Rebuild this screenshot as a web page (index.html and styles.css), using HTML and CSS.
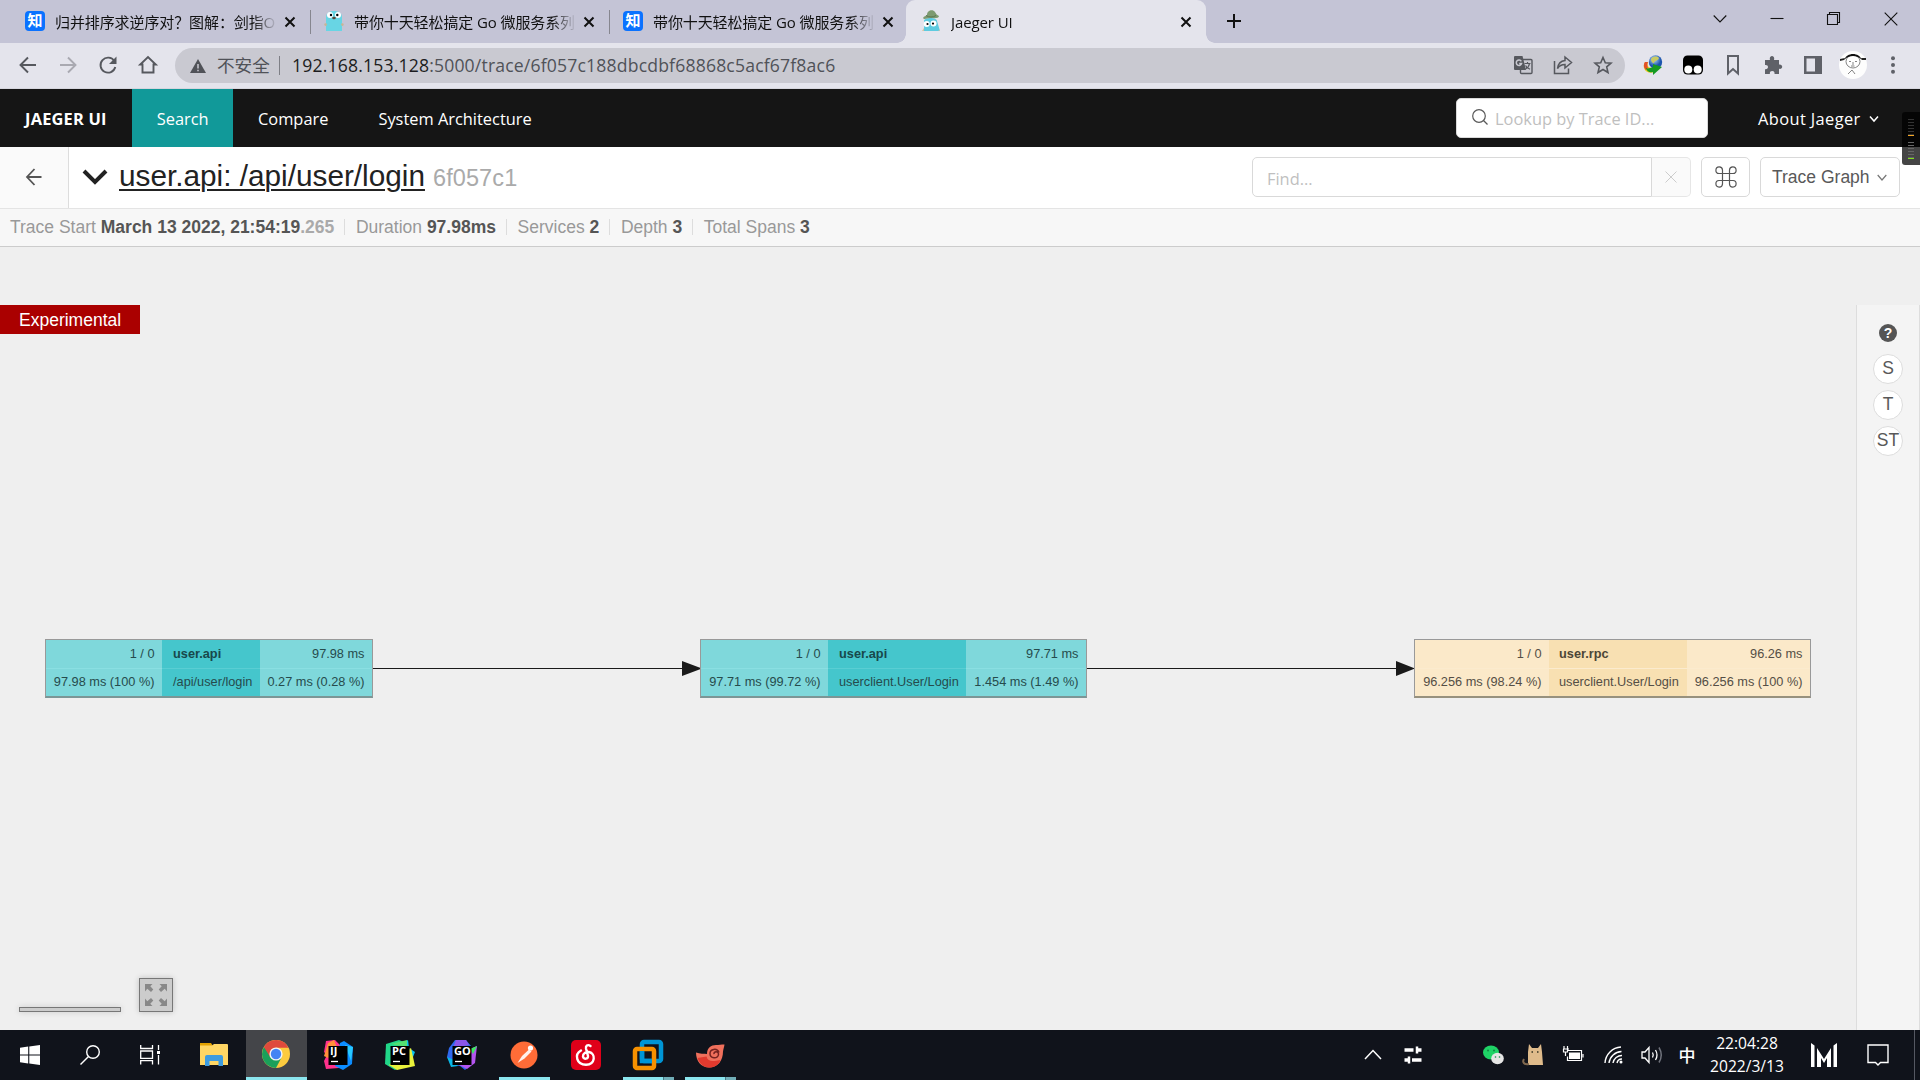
FILE: index.html
```html
<!DOCTYPE html>
<html lang="zh-CN">
<head>
<meta charset="utf-8">
<title>Jaeger UI</title>
<link rel="stylesheet" href="styles.css">
</head>
<body>
<div class="screen">
  <div class="tabstrip">
    <div class="tab">
      <span class="zhi">知</span>
      <span class="tab-title">归并排序求逆序对？图解：剑指O</span>
      <svg class="tab-close" viewBox="0 0 12 12"><path d="M1.5 1.5l9 9M10.5 1.5l-9 9"/></svg>
    </div>
    <div class="tab">
      <svg class="fav" viewBox="0 0 20 20"><path d="M2 20V7C2 2 5 0 10 0s8 2 8 7v13z" fill="#68d5e4"/><circle cx="1.6" cy="13.6" r="1.3" fill="#c9b595"/><circle cx="18.4" cy="13.6" r="1.3" fill="#c9b595"/><circle cx="6" cy="4" r="3" fill="#fff"/><circle cx="14" cy="4" r="3" fill="#fff"/><circle cx="7" cy="4" r="1.2"/><circle cx="13.3" cy="4" r="1.2"/><ellipse cx="10" cy="7" rx="1.8" ry="1.2" fill="#5b4a3c"/></svg>
      <span class="tab-title">带你十天轻松搞定 Go 微服务系列</span>
      <svg class="tab-close" viewBox="0 0 12 12"><path d="M1.5 1.5l9 9M10.5 1.5l-9 9"/></svg>
    </div>
    <div class="tab tab-last">
      <span class="zhi">知</span>
      <span class="tab-title">带你十天轻松搞定 Go 微服务系列</span>
      <svg class="tab-close" viewBox="0 0 12 12"><path d="M1.5 1.5l9 9M10.5 1.5l-9 9"/></svg>
    </div>
    <div class="tab tab-active">
      <svg class="fav" viewBox="0 0 20 20"><path d="M3 20V10c0-4 13-4 13 0l3 10z" fill="#5ecbe0"/><path d="M2 7c1-2 3-2 4-3 0-5 6-6 8-3 1 2 2 3 4 4 0 3-6 2-9 2S3 9 2 7z" fill="#7d9a70"/><path d="M5 4.500c3 2 7 2 10 0" stroke="#5b7550" fill="none"/><circle cx="5.700" cy="13" r="3" fill="#fff"/><circle cx="12.500" cy="12.500" r="3" fill="#fff"/><circle cx="6.500" cy="13" r="1.1"/><circle cx="12" cy="12.600" r="1.1"/><path d="M1 20l2-3v3zM17 19l2 0v1z" fill="#d8c3a0"/></svg>
      <span class="tab-title">Jaeger UI</span>
      <svg class="tab-close" viewBox="0 0 12 12"><path d="M1.5 1.5l9 9M10.5 1.5l-9 9"/></svg>
    </div>
    <svg class="new-tab" viewBox="0 0 16 16"><path d="M8 1v14M1 8h14"/></svg>
    <div class="win-controls">
      <svg viewBox="0 0 14 14"><path d="M.7 3.5L7 10l6.300-6.500"/></svg>
      <svg viewBox="0 0 14 14"><path d="M.5 6.500h13"/></svg>
      <svg viewBox="0 0 14 14"><path d="M.5 2.500h10v10h-10zM2.500 2.500v-2h10v10h-2"/></svg>
      <svg viewBox="0 0 14 14"><path d="M.7.7l12.600 12.600M13.300.7L.7 13.300"/></svg>
    </div>
  </div>

  <div class="toolbar">
    <div class="nav-btns">
      <svg viewBox="0 0 20 20"><path d="M18 10H3M10 2.500L2.500 10l7.500 7.500"/></svg>
      <svg class="dim" viewBox="0 0 20 20"><path d="M2 10h15M10 2.500l7.500 7.500-7.500 7.500"/></svg>
      <svg viewBox="0 0 20 20"><path d="M16.300 6A7.500 7.500 0 1 0 17.300 12"/><path class="fill" d="M18.500 1.500v7.500H11z"/></svg>
      <svg viewBox="0 0 20 20"><path d="M4.500 17.500V9.500H2.200L10 2l7.800 7.500h-2.300v8z"/></svg>
    </div>
    <div class="omnibox">
      <svg class="warn" viewBox="0 0 16 14"><path d="M8 0l8 14H0z" fill="#505258"/><path d="M8 5v4.500M8 10.700v1.600" stroke="#c9c9d1" stroke-width="1.500"/></svg>
      <span class="insecure">不安全</span>
      <span class="omni-sep"></span>
      <span class="url"><b>192.168.153.128</b>:5000/trace/6f057c188dbcdbf68868c5acf67f8ac6</span>
      <div class="omni-icons">
        <svg viewBox="0 0 20 20"><rect x="7.500" y="4.500" width="11.500" height="14" rx="1" stroke-width="1.400"/><path class="fill" d="M2 1h7.500l3.500 14H2a1 1 0 0 1-1-1V2a1 1 0 0 1 1-1z"/><path d="M8.300 6.300A2.700 2.700 0 1 0 8.600 8.500H6.200" stroke="#c9c9d1" stroke-width="1.500"/><path d="M11.500 8.500h6M14.500 7v1.500M16.500 8.500c-.5 3-2 4.500-4 5.500M12.500 10.500c1 2 2.500 3 4.500 3.800" stroke-width="1.200"/></svg>
        <svg viewBox="0 0 20 20"><path d="M1.500 6v12.500h14V13.500M12 2l6.500 5.500L12 13v-3.500c-3.500 0-5.500.8-7.500 4C5 9.500 7.500 6 12 5.500z" stroke-width="1.500"/></svg>
        <svg viewBox="0 0 20 20"><path d="M10 2.500l2.300 5.200 5.700.5-4.300 3.700 1.300 5.600-5-3-5 3 1.300-5.600L2 8.200l5.700-.5z" stroke-width="1.600"/></svg>
      </div>
    </div>
    <div class="extensions">
      <svg viewBox="0 0 20 20"><defs><radialGradient id="globe" cx=".4" cy=".3"><stop offset="0" stop-color="#b9dcff"/><stop offset="1" stop-color="#1c55ad"/></radialGradient></defs><path d="M2 7C-2 13 4 20 11 17l-2-4C5 13 4 10 5 7z" fill="#e9c81c"/><path d="M2 7c-2 3-1 6 1 8l2-2C4 11 4 9 5 7z" fill="#e2502a"/><circle cx="12.500" cy="7" r="6.700" fill="url(#globe)"/><path d="M8 4c2-3 6-3 8-1-1 3-4 2-5 5-2 0-3-2-3-4z" fill="#c9cb63"/><path d="M3 13c2 1 4 0 7-1V9l9 3-9 8v-3c-3 1-6 0-7-4z" fill="#159a22"/></svg>
      <svg viewBox="0 0 20 20"><rect width="20" height="19" x="0" y=".5" rx="4.500" fill="#000"/><circle cx="5.300" cy="14.500" r="4" fill="#fff"/><circle cx="14.700" cy="14.500" r="4" fill="#fff"/></svg>
      <svg class="line" viewBox="0 0 20 20"><path d="M5 1h10v17.500l-5-4.500-5 4.500z"/></svg>
      <svg viewBox="0 0 20 20"><path d="M2 5h5C6.300 2.500 7.500 1 9 1s2.700 1.500 2 4h5v4.500c2-.3 3.200.8 3.200 2.300S18 14.200 16 13.800V19h-4.500c.3-2-.7-3-2.300-3s-2.700 1-2.300 3H2v-4.800c2 .3 3-.9 3-2.200S4 9.700 2 10z" fill="#5f6168"/></svg>
      <svg viewBox="0 0 20 20"><path d="M1 1h18v18H1zM3.500 3.500v13H12v-13z" fill="#5f6168" fill-rule="evenodd"/></svg>
      <svg class="avatar" viewBox="0 0 28 28"><circle cx="14" cy="14" r="14" fill="#fdfdfd"/><ellipse cx="14" cy="10.500" rx="7" ry="6.500" fill="#fff" stroke="#666" stroke-width=".8"/><path d="M5 9C8 1 20 1 23 9c-3-3-6-4-9-4S8 6 5 9z" fill="#111"/><path d="M1 8l5-1-1 2-4 1zM22 7l5 0v2l-4 0z" fill="#222"/><path d="M10 10.500h2M16 10.500h2M14 11v3M12 15h3.500M13 19l-4 4M13 19l3 4" stroke="#666" stroke-width=".8" fill="none"/></svg>
      <svg viewBox="0 0 20 20"><g fill="#5f6168"><circle cx="10" cy="3.200" r="2"/><circle cx="10" cy="10" r="2"/><circle cx="10" cy="16.800" r="2"/></g></svg>
    </div>
  </div>

  <nav class="jaeger-nav">
    <span class="brand">JAEGER UI</span>
    <span class="nav-item selected">Search</span>
    <span class="nav-item">Compare</span>
    <span class="nav-item">System Architecture</span>
    <div class="lookup"><svg viewBox="0 0 16 16"><circle cx="7" cy="7" r="6.300"/><path d="M11.500 11.500l4 4"/></svg><span>Lookup by Trace ID...</span></div>
    <div class="about">About Jaeger<svg viewBox="0 0 10 8"><path d="M1 1.500l4 4.500 4-4.500"/></svg></div>
    <div class="meter"><i></i><i></i></div>
  </nav>

  <header class="trace-head">
    <div class="back"><svg viewBox="0 0 16 18"><path d="M15.500 9H1M8.500 1L1 9l7.500 8"/></svg></div>
    <svg class="collapse" viewBox="0 0 26 16"><path d="M2 2l11 11L24 2"/></svg>
    <h1><span class="trace-name">user.api: /api/user/login</span><small>6f057c1</small></h1>
    <div class="find"><span>Find...</span></div>
    <div class="find-clear"><svg viewBox="0 0 12 12"><path d="M.5.5l11 11M11.500.5l-11 11"/></svg></div>
    <div class="shortcut"><svg viewBox="0 0 22 22"><path d="M7.500 7.500h7v7h-7zM7.500 7.500H4A3.300 3.300 0 1 1 7.500 4zM14.500 7.500V4A3.300 3.300 0 1 1 18 7.500zM14.500 14.500H18A3.300 3.300 0 1 1 14.500 18zM7.500 14.500V18A3.300 3.300 0 1 1 4 14.500z"/></svg></div>
    <div class="view-select">Trace Graph<svg viewBox="0 0 10 8"><path d="M.7 1l4.300 5 4.300-5"/></svg></div>
  </header>

  <div class="trace-meta">
    <span>Trace Start <b>March 13 2022, 21:54:19<em>.265</em></b></span>
    <span>Duration <b>97.98ms</b></span>
    <span>Services <b>2</b></span>
    <span>Depth <b>3</b></span>
    <span>Total Spans <b>3</b></span>
  </div>

  <main class="graph">
    <div class="experimental">Experimental</div>
    <svg class="edges" viewBox="0 0 1920 783"><path d="M373 421.500H690M1087 421.500H1404" stroke="#1a1a1a" stroke-width="1.200"/><path d="M682 414l20 7.500-20 7.500zM1396 414l19 7.500-19 7.500z" fill="#1a1a1a"/></svg>
    <div class="node node-a">
      <div><span>1 / 0</span><span>97.98 ms (100 %)</span></div>
      <div class="mid"><b>user.api</b><span>/api/user/login</span></div>
      <div><span>97.98 ms</span><span>0.27 ms (0.28 %)</span></div>
    </div>
    <div class="node node-b">
      <div><span>1 / 0</span><span>97.71 ms (99.72 %)</span></div>
      <div class="mid"><b>user.api</b><span>userclient.User/Login</span></div>
      <div><span>97.71 ms</span><span>1.454 ms (1.49 %)</span></div>
    </div>
    <div class="node node-c">
      <div><span>1 / 0</span><span>96.256 ms (98.24 %)</span></div>
      <div class="mid"><b>user.rpc</b><span>userclient.User/Login</span></div>
      <div><span>96.26 ms</span><span>96.256 ms (100 %)</span></div>
    </div>
    <div class="minimap">
      <div class="map-bar"></div>
      <div class="map-reset"><svg viewBox="0 0 22 22"><path d="M0 0h7.500L5.300 2.200 8.300 5.600 6 8 2.300 4.800 0 7.500zM22 0h-7.500l2.200 2.200-3 3.400L16 8l3.700-3.200L22 7.500zM0 22h7.500l-2.200-2.200 3-3.400L6 14l-3.700 3.200L0 14.500zM22 22h-7.500l2.200-2.200-3-3.400L16 14l3.700 3.200 2.300-2.700z"/></svg></div>
    </div>
    <aside class="modes">
      <span class="help">?</span>
      <span>S</span><span>T</span><span>ST</span>
    </aside>
  </main>

  <footer class="taskbar">
    <div class="sys">
      <svg viewBox="0 0 20 20"><path d="M0 2.800L8.200 1.600v7.800H0zM9.300 1.500L20 0v9.400H9.300zM0 10.500h8.200v7.900L0 17.200zM9.300 10.500H20V20L9.300 18.500z" fill="#fff"/></svg>
      <svg viewBox="0 0 20 20"><circle cx="13" cy="7" r="6.300" fill="none" stroke="#fff" stroke-width="1.400"/><path d="M8.500 11.500L.5 19.500" stroke="#fff" stroke-width="1.500"/></svg>
      <svg viewBox="0 0 20 20"><path d="M.7 0v3.500h11.800V0M.7 19.500v-3.800h11.800v3.800M.7 6h11.800v7.300H.7zM18.500 0v5M18.500 10v9.500" fill="none" stroke="#fff" stroke-width="1.300"/><path d="M17 6h3v3h-3z" fill="#fff"/></svg>
    </div>
    <div class="apps">
      <div class="app"><svg viewBox="0 0 30 30"><path d="M1 4h11l2 3H1z" fill="#e2a100"/><path d="M1 6.500h12l2-1.500h13a1 1 0 0 1 1 1v20H1z" fill="#ffd664"/><path d="M6 27V18a2 2 0 0 1 2-2h14a2 2 0 0 1 2 2v9h-4.500v-5h-9v5z" fill="#3d9be0"/></svg></div>
      <div class="app current"><svg viewBox="0 0 30 30"><circle cx="15" cy="15" r="14" fill="#fccb3f"/><path d="M2.900 8A14 14 0 0 0 15 29l5.500-10.500L15 15z" fill="#1aa05a"/><path d="M2.900 8A14 14 0 0 1 27.500 8.700H15l-6 9z" fill="#df4a3c"/><circle cx="15" cy="15" r="6.600" fill="#f4f4f4"/><circle cx="15" cy="15" r="5.200" fill="#4584f4"/></svg></div>
      <div class="app"><svg viewBox="0 0 30 30"><path d="M3 1l9-1 6 6-2 22-13 1-2-8 3-6-3-3z" fill="#ff318c"/><path d="M5 3l6-3 4 10-10 8-4-2z" fill="#ff8f3a"/><path d="M17 3l4-2 9 6-1 17-9 6-8-4z" fill="#0c8cff"/><path d="M22 5l8 2-2 14z" fill="#27c8ff"/><rect x="5.500" y="6" width="19" height="19"/><path d="M8 21.500h7" stroke="#fff" stroke-width="1.300"/></svg><span>IJ</span></div>
      <div class="app"><svg viewBox="0 0 30 30"><path d="M1 4l13-4 7 3-4 24-7 3-10-6z" fill="#21d789"/><path d="M18 3l5-3 1 8 6 4-2 5-8 2z" fill="#07c3f2"/><path d="M4 25l22-17 4 18-18 4z" fill="#eaf23b"/><path d="M6 4l16-4v7z" fill="#54e072"/><rect x="5.500" y="6" width="19" height="19"/><path d="M8 21.500h7" stroke="#fff" stroke-width="1.300"/></svg><span>PC</span></div>
      <div class="app"><svg viewBox="0 0 30 30"><path d="M8 0h11l5 6v18l-6 6-5-4-8-1-5-8 2-9z" fill="#2f68ee"/><path d="M9 0h10l3 5-16 3z" fill="#8b55ea"/><path d="M21 10l9-4-2 17-8 6-8-4z" fill="#b455f0"/><path d="M23 9l7-3-4 8z" fill="#3bea62"/><path d="M0 17l7 3 4 6-7 1z" fill="#08b7e7"/><rect x="5.500" y="6" width="19" height="19"/><path d="M8 21.500h7" stroke="#fff" stroke-width="1.300"/></svg><span>GO</span></div>
      <div class="app run"><svg viewBox="0 0 30 30"><circle cx="15" cy="15" r="13.500" fill="#ff6c37"/><circle cx="21.500" cy="8" r="2.600" fill="#fff"/><path d="M20 9.500l2.500 2-7 7L8.500 23l4.500-7z" fill="#fff" opacity=".9"/></svg></div>
      <div class="app"><svg viewBox="0 0 30 30"><rect width="30" height="30" rx="5" fill="#e00019"/><path d="M19.500 6c-3-2-5 0-4.500 2.500l2 7.500c.5 3-4.500 4-5 .5-.3-3 3-5 6-4.500 7 1.500 6.500 12.500-3 12.800C5.500 24.500 3 14.500 10 10.500" fill="none" stroke="#fff" stroke-width="2.400" stroke-linecap="round"/></svg></div>
      <div class="app run multi"><svg viewBox="0 0 30 30"><rect x="9" y="2" width="19" height="19" rx="2" fill="none" stroke="#0095d5" stroke-width="4.500"/><rect x="2" y="9" width="19" height="19" rx="2" fill="none" stroke="#f79100" stroke-width="4.500"/><path d="M9 11v10h10" fill="none" stroke="#0095d5" stroke-width="4.500"/></svg></div>
      <div class="app run multi"><svg viewBox="0 0 30 30"><path d="M1 12.500c4 1.500 8 1 11 1.500C12 8 16 5 21 5c3 0 5-.5 8.500-.5-.5 3-1 4-1.500 7 0 9-5 16-14 16C6 27.500 1 21 1 12.500z" fill="#f0705c"/><path d="M2.500 18l9-1.500c1 4 4 5 8 4.500l6-1c-2 5-6 7.500-11.500 7.500-5.500 0-9.500-4-11.500-9.500z" fill="#e23a2e"/><path d="M24 12.500c-2-5-9-3.500-9 1 0 5 8 6 8.500 1 .2-3.500-5-3.500-4.500-.3" fill="none" stroke="#76221f" stroke-width="1.500"/></svg></div>
    </div>
    <div class="tray">
      <svg viewBox="0 0 22 22"><path d="M3 15l8-8.500L19 15"/></svg>
      <svg viewBox="0 0 22 22"><path d="M2.500 6h9M14 6h5.500M2.500 16h4M10 16h9.500" stroke-width="3.500"/><path d="M15 2.500v7M7 12.500v7" stroke-width="2.500"/></svg>
      <svg class="wechat" viewBox="0 0 22 22"><ellipse cx="9" cy="8.500" rx="8" ry="7" fill="#1fd366" stroke="none"/><ellipse cx="15.500" cy="14.500" rx="6.300" ry="5.800" fill="#e6e6e6" stroke="none"/><g fill="#184" stroke="none"><circle cx="6" cy="6.500" r="1"/><circle cx="12" cy="6.500" r="1"/><circle cx="13.500" cy="13" r=".8"/><circle cx="17.500" cy="13" r=".8"/></g></svg>
      <svg viewBox="0 0 22 22"><path d="M6 21V8L7 0l3 4h6l3-4 1 8 1 13z" fill="#dfbb8b" stroke="none"/><path d="M7 20c-5 1-7-2-5-5" stroke="#80684e" stroke-width="2"/><path d="M9.500 8h1.500M15 8h1.500" stroke="#332"/></svg>
      <svg viewBox="0 0 22 22"><path d="M5.500 6.500h14v10h-14v-4M21 10v3.500M1 5h6M2 2v3M5.500 2v3M1.500 5v3h4V5M3.500 8v4" stroke-width="1.200"/><path d="M7 8.500h11v6.500H7z" fill="#fff" stroke="none"/></svg>
      <svg viewBox="0 0 22 22"><g stroke-width="1.400"><path d="M2 19A17 17 0 0 1 18 3M6 19A13 13 0 0 1 18.500 7.500M10 19a9 9 0 0 1 9-7.500M14 19a5 5 0 0 1 5-4"/></g><circle cx="18" cy="18" r="1.500" fill="#fff" stroke="none"/></svg>
      <svg viewBox="0 0 22 22"><path d="M1 8h3l4-4.500v15L4 14H1zM11.500 8.500q1.500 2.500 0 5M14.500 6q3 5 0 10" stroke-width="1.300"/><path d="M18 3.500q4.500 7.500 0 15" stroke="#70737c"/></svg>
      <span class="ime">中</span>
      <div class="clock"><span>22:04:28</span><span>2022/3/13</span></div>
      <svg class="mlogo" viewBox="0 0 26 24"><path d="M0 0l3.500 2.500V24H0zM26 0l-3.500 2.500V24H26zM6 24V5l7 11 7-11v19h-4v-9l-3 5-3-5v9z" fill="#fff" stroke="none"/></svg>
      <svg class="notif" viewBox="0 0 22 22"><path d="M1 1h20v17.500h-7.500L11 21l-2.500-2.500H1z" stroke-width="1.400"/></svg>
      <i class="peek"></i>
    </div>
  </footer>
</div>
</body>
</html>
```
FILE: styles.css
```css
* { box-sizing: border-box; }
body { margin: 0; }
svg { display: block; flex: none; overflow: visible; }
.screen {
  width: 1920px; height: 1080px; overflow: hidden;
  display: flex; flex-direction: column;
  background: #efefef;
  font-family: "Liberation Sans", "Noto Sans CJK SC", sans-serif;
  white-space: nowrap;
}

/* browser chrome */
.tabstrip {
  height: 43px; flex: none; display: flex; background: #c4c4d6;
  font: 15px "Open Sans", "Noto Sans CJK SC", sans-serif; color: #111;
  padding-left: 12px;
}
.tab { width: 299px; height: 43px; padding: 0 15px 0 13px; display: flex; align-items: center; position: relative; }
.tab::after { content: ""; position: absolute; right: 0; top: 10px; width: 1px; height: 24px; background: #86868f; }
.tab-last { width: 296px; padding-right: 12px; }
.tab-last::after, .tab-active::after { display: none; }
.tab-active { width: 300px; background: #e4e4ec; border-radius: 9px 9px 0 0; padding: 0 14px 0 15px; }
.tab-active::before {
  content: ""; position: absolute; left: -9px; right: -9px; bottom: 0; height: 9px;
  background:
    radial-gradient(circle at 0 0, transparent 8.500px, #e4e4ec 9px) 0 0 / 9px 9px no-repeat,
    radial-gradient(circle at 100% 0, transparent 8.500px, #e4e4ec 9px) 100% 0 / 9px 9px no-repeat;
}
.tab-title {
  width: 220px; flex: none; margin-left: 10px; line-height: 24px; letter-spacing: -.1px;
  -webkit-mask-image: linear-gradient(90deg, #000 90%, rgba(0,0,0,.1)); mask-image: linear-gradient(90deg, #000 90%, rgba(0,0,0,.1));
}
.tab-close { margin-left: auto; width: 12px; height: 12px; stroke: #111; stroke-width: 2; }
.fav, .zhi { width: 20px; height: 20px; flex: none; margin-top: -1px; }
.zhi { background: #0a72ff; color: #fff; border-radius: 4px; font-size: 15px; font-weight: 700; line-height: 19px; text-align: center; }
.new-tab { width: 16px; height: 16px; margin: 13px 0 0 20px; stroke: #111; stroke-width: 2; fill: none; }
.win-controls { margin-left: auto; display: flex; gap: 43px; padding: 12px 22px 0 0; }
.win-controls svg { width: 14px; height: 14px; fill: none; stroke: #111; stroke-width: 1.100; }

.toolbar { height: 46px; flex: none; background: #e4e4ec; display: flex; align-items: flex-start; padding-top: 5px; border-bottom: 1px solid #d6d6de; }
.nav-btns { width: 175px; height: 35px; display: flex; align-items: center; gap: 20px; padding: 0 0 1px 17.500px; }
.nav-btns svg, .omni-icons svg { width: 20px; height: 20px; fill: none; stroke: #56585e; stroke-width: 1.900; }
.nav-btns .dim { stroke: #a9a9b1; }
.nav-btns .fill, .omni-icons .fill { fill: #56585e; stroke: none; }
.omnibox { width: 1450px; height: 35px; border-radius: 18px; background: #c9c9d1; display: flex; align-items: center; padding: 0 12px 0 15px; font: 17.600px "Open Sans", "Noto Sans CJK SC", sans-serif; color: #505258; }
.warn { width: 16px; height: 14px; margin-top: 1px; }
.insecure { margin-left: 11px; width: 53px; font-size: 17.600px; line-height: 30px; margin-top: -2px; }
.omni-sep { width: 1px; height: 19px; background: #7e7f86; margin: 0 12px 0 9px; }
.url { letter-spacing: .17px; line-height: 30px; margin-top: -2px; }
.url b { font-weight: 400; color: #1c1c20; }
.omni-icons { margin-left: auto; display: flex; gap: 20px; padding-bottom: 1px; }
.extensions { height: 35px; display: flex; align-items: center; padding: 0 0 1px 18px; gap: 20px; }
.extensions svg { width: 20px; height: 20px; }
.extensions .line { fill: none; stroke: #5f6168; stroke-width: 2; }
.extensions .avatar { width: 28px; height: 28px; margin: 0 -4px; }

/* application navigation */
.jaeger-nav {
  height: 58px; flex: none; background: #151515; color: #fff; display: flex; align-items: center; position: relative;
  font: 16.400px/59px "Open Sans", sans-serif;
}
.brand { width: 132px; padding-left: 25px; font-weight: 700; letter-spacing: .2px; }
.nav-item { padding: 0 25px; height: 58px; }
.selected { background: #119999; width: 101px; padding: 0 24.700px; }
.lookup { width: 252px; height: 40px; background: #fff; border: 1px solid #d9d9d9; border-radius: 5px; margin-left: auto; display: flex; align-items: center; padding-left: 15px; color: #bfbfbf; line-height: 39px; }
.lookup svg { width: 16px; height: 16px; stroke: #595959; stroke-width: 1.200; fill: none; margin: -2px 7px 0 0; }
.about { width: 212px; padding-left: 50px; display: flex; align-items: center; letter-spacing: .4px; }
.about svg { width: 10px; height: 8px; margin: 2px 0 0 8px; stroke: #fff; stroke-width: 1.500; fill: none; }
.meter { position: absolute; z-index: 2; left: 1902px; top: 23px; width: 18px; height: 53px; border-radius: 3px 0 0 3px; background: rgba(0,0,0,.73); padding: 7px 6px 0; }
.meter i { display: block; height: 17px; margin-bottom: 6px; background: repeating-linear-gradient(#333 0 1px, transparent 1px 3px); border-bottom: 1px solid #f5a623; background-clip: padding-box; }
.meter i + i { border-color: #7fe01b; background: repeating-linear-gradient(#666 0 1px, transparent 1px 3px) padding-box; }

.trace-head { height: 62px; flex: none; background: #fff; border-bottom: 1px solid #e4e4e4; display: flex; align-items: center; padding-bottom: 2px; }
.back { width: 69px; height: 61px; margin-bottom: -2px; background: #fafafa; border-right: 1px solid #ddd; display: flex; align-items: center; padding: 0 0 2px 25px; }
.back svg { width: 18px; height: 18px; fill: none; stroke: #555; stroke-width: 1.800; }
.collapse { width: 26px; height: 16px; margin: 1px 11.500px 0 12.500px; fill: none; stroke: #222; stroke-width: 4; }
h1 { margin: 0; flex: 1; font-weight: 400; font-size: 29.750px; line-height: 60px; color: #222; }
.trace-name { text-decoration: underline; text-decoration-thickness: 2px; text-underline-offset: 3px; }
h1 small { font-size: 23.500px; color: #aaa; margin-left: 8px; letter-spacing: .1px; }
.find { width: 400px; height: 40px; border: 1px solid #d9d9d9; border-radius: 5px 0 0 5px; padding-left: 14px; font: 16.400px/41px "Open Sans", sans-serif; color: #bfbfbf; }
.find-clear { width: 39px; height: 40px; border: 1px solid #e6e6e6; border-left: 0; border-radius: 0 5px 5px 0; background: #fafafa; display: grid; place-items: center; }
.find-clear svg { width: 12px; height: 12px; stroke: #ccc; }
.shortcut { width: 49px; height: 40px; margin: 0 10px; border: 1px solid #d9d9d9; border-radius: 5px; display: grid; place-items: center; }
.shortcut svg { width: 22px; height: 22px; fill: none; stroke: #555; stroke-width: 1.200; }
.view-select { width: 140px; height: 40px; margin-right: 20px; border: 1px solid #d9d9d9; border-radius: 5px; display: flex; align-items: center; padding: 1px 0 0 11px; font-size: 17.500px; color: #595959; }
.view-select svg { width: 10px; height: 8px; margin: 1px 0 0 7px; fill: none; stroke: #777; stroke-width: 1.200; }

.trace-meta { height: 38px; flex: none; background: #f7f7f7; border-bottom: 1px solid #ccc; display: flex; align-items: center; padding: 0 0 2px 10px; color: #999; font-size: 17.500px; line-height: 20px; }
.trace-meta span + span { margin-left: 10px; padding-left: 10.600px; border-left: 1px solid #ddd; line-height: 16px; }
.trace-meta b { color: #555; }
.trace-meta em { color: #aaa; font-style: normal; }

/* graph canvas */
.graph { height: 783px; flex: none; position: relative; }
.experimental { position: absolute; left: 0; top: 58px; width: 140px; height: 29px; background: #a00; color: #fff; font-size: 17.500px; line-height: 31px; padding-left: 19px; }
.edges { position: absolute; left: 0; top: 0; width: 1920px; height: 783px; fill: none; }
.node {
  position: absolute; top: 392px; height: 59px; display: grid; font-size: 12.750px; color: #264b4c;
  background: #7fd8db; border: 1px solid #999; border-bottom: 2px solid #7b9696;
}
.node > div { display: grid; grid-template-rows: 28px 28px; line-height: 28px; text-align: right; padding-right: 7.500px; }
.node > div > :last-child { border-top: 1px solid #8adfe2; margin-right: -7.500px; padding-right: 7.500px; line-height: 26px; }
.node > .mid { background: #45c6cc; text-align: left; padding: 0; }
.node > .mid > * { padding-left: 11px; margin: 0; }
.node > .mid > :last-child { border-top-color: #59ced3; margin: 0; padding-right: 0; }
.node b { color: #18484b; }
.node-a { left: 45px; width: 328px; grid-template-columns: 116px 98px 1fr; }
.node-b { left: 700px; width: 387px; grid-template-columns: 127px 138px 1fr; }
.node-c { left: 1414px; width: 397px; grid-template-columns: 134px 138px 1fr; background: #fbe9c9; color: #544e45; border-bottom-color: #97917e; }
.node-c > .mid { background: #f8e0b2; }
.node-c > .mid > * { padding-left: 10px; }
.node-c b { color: #4c4637; }
.node.node-c > div > :last-child { border-top-color: #fbebce; }
.minimap { position: absolute; left: 19px; top: 731px; display: flex; align-items: flex-end; gap: 18px; }
.map-bar { width: 102px; height: 5px; border: 1px solid #777; background: #ccc; box-shadow: 0 0 6px rgba(0,0,0,.15); }
.map-reset { width: 34px; height: 34px; border: 1px solid #777; background: #ccc; display: grid; place-items: center; box-shadow: 0 0 6px rgba(0,0,0,.2); }
.map-reset svg { width: 22px; height: 22px; fill: #888; }
.modes { position: absolute; right: 0; top: 58px; width: 64px; height: 725px; background: #f4f4f4; border-left: 1px solid #ddd; border-right: 1px solid #ddd; display: flex; flex-direction: column; align-items: center; padding-top: 19px; gap: 6px; }
.modes span { width: 30px; height: 30px; border: 1px solid #ddd; border-radius: 50%; background: #fff; color: #595959; font-size: 17.500px; line-height: 27px; display: flex; justify-content: center; }
.modes .help { width: 18px; height: 18px; border: 0; background: #555; color: #fff; font: bold 14px/18px "Liberation Sans", sans-serif; margin-bottom: 6px; }

/* desktop taskbar */
.taskbar { height: 50px; flex: none; background: #10131b; color: #fff; display: flex; }
.sys { width: 183px; display: flex; padding: 15px 0 0 20px; gap: 40px; }
.sys svg { width: 20px; height: 20px; }
.apps { display: flex; }
.app { width: 62px; height: 50px; padding: 10px 16px; position: relative; }
.app svg { width: 30px; height: 30px; }
.app:nth-child(1) svg, .app:nth-child(2) svg { margin-top: -1px; }
.app span { position: absolute; left: 23px; top: 12px; font: bold 11px/18px "Open Sans", sans-serif; }
.current { background: linear-gradient(#444549, #444549) 1px 0 / 61px 50px no-repeat; }
.current::after { content: ""; position: absolute; left: 1px; right: 0; bottom: 0; height: 3px; background: #8be5ee; }
.run::after { content: ""; position: absolute; left: 6px; width: 51px; bottom: 0; height: 3px; background: #8be5ee; }
.multi::after { background: linear-gradient(90deg, #8be5ee 40px, #497a83 40px 41px, #71aeb8 41px); }
.tray {
  margin-left: auto; width: 567px; display: grid; align-items: center; justify-items: center;
  grid-template-columns: 40px 40px 40px 40px 40px 40px 41px 36px 34px 86px 68px 40px 22px;
}
.tray svg { width: 22px; height: 22px; fill: none; stroke: #fff; stroke-width: 1.500; }
.tray .wechat { grid-column: 4; }
.tray .mlogo { width: 26px; height: 24px; }
.ime { font: 500 17px/24px "Noto Sans CJK SC", sans-serif; }
.clock { display: grid; justify-items: center; font: 15.600px/23px "Open Sans", sans-serif; }
.peek { justify-self: end; width: 1px; height: 50px; margin-right: 5px; background: #555862; }
```
